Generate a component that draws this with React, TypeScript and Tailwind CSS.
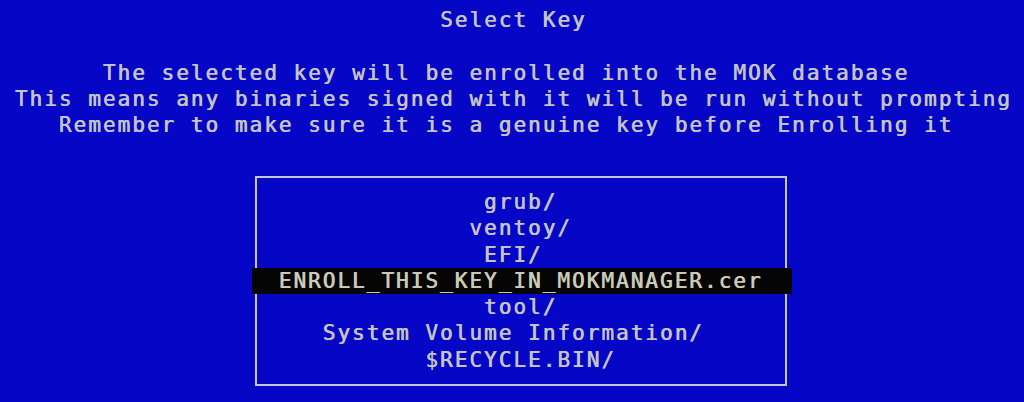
const COLS = 70;

const intro = [
  'The selected key will be enrolled into the MOK database',
  'This means any binaries signed with it will be run without prompting',
  'Remember to make sure it is a genuine key before Enrolling it',
];

const entries = [
  'grub/',
  'ventoy/',
  'EFI/',
  'ENROLL_THIS_KEY_IN_MOKMANAGER.cer',
  'tool/',
  'System Volume Information/',
  '$RECYCLE.BIN/',
];

const selected = 3;

// console centering: column where a string starts on the 70-col screen
function startCol(text: string, roundUp = false) {
  const free = COLS - text.length;
  return roundUp ? Math.ceil(free / 2) : Math.floor(free / 2);
}

function Line({ text }: { text: string }) {
  return <div className="h-[26.3px] whitespace-pre">{' '.repeat(startCol(text)) + text}</div>;
}

export default function App() {
  return (
    <div className="w-[1024px] h-[402px] overflow-hidden bg-[#0606c6] pt-[7px] text-[#c4c4c4] text-[21px] leading-[26.3px] tracking-[2.02px] font-['DejaVu_Sans_Mono',monospace] [text-shadow:0.7px_0_0_currentColor]">
      <Line text="Select Key" />
      <div className="h-[26.3px]" />
      {intro.map((t) => (
        <Line key={t} text={t} />
      ))}
      <div className="h-[26.3px]" />

      <div className="ml-[255px] mt-[11.2px] w-[532px] border-2 border-[#c6c6d2] pt-[11px] pb-[10.8px]">
        {entries.map((name, i) => (
          <div
            key={name}
            className={
              i === selected
                ? '-ml-[5px] -mr-[7px] h-[26.3px] bg-[#050505] pl-[11.88px] whitespace-pre text-[#cacab8]'
                : '-ml-[5px] -mr-[7px] h-[26.3px] pl-[11.88px] whitespace-pre'
            }
          >
            {' '.repeat(startCol(name, true) - 18) + name}
          </div>
        ))}
      </div>
    </div>
  );
}
